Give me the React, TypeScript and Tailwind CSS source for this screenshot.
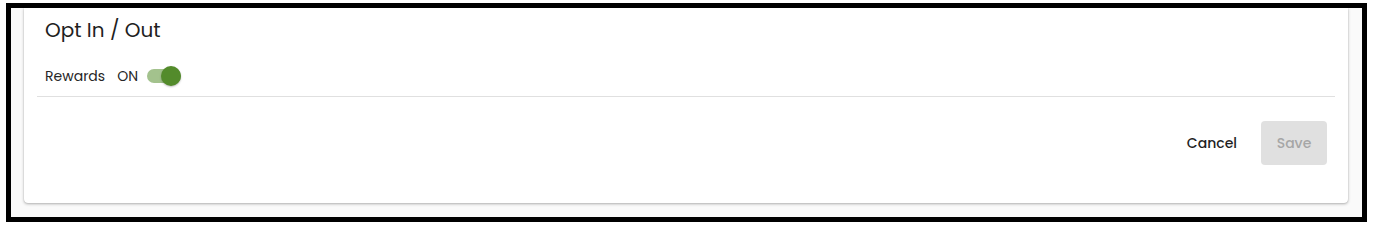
import { useState } from 'react'

function Toggle({ on, onChange }: { on: boolean; onChange: (v: boolean) => void }) {
  return (
    <button
      onClick={() => onChange(!on)}
      className="relative w-[38px] h-[22px] flex items-center"
      aria-pressed={on}
    >
      <span className={`ml-[2px] w-[34px] h-[14px] rounded-full ${on ? 'bg-[#a3c28d]' : 'bg-[#bdbdbd]'}`} />
      <span
        className={`absolute top-[1px] w-[20px] h-[20px] rounded-full shadow-[0_1px_2px_rgba(0,0,0,0.25)] ${
          on ? 'left-[16px] bg-[#538b2b]' : 'left-0 bg-[#fafafa]'
        }`}
      />
    </button>
  )
}

export default function App() {
  const [rewards, setRewards] = useState(true)

  return (
    <div className="w-[1375px] h-[229px] bg-white pt-[3px] pl-[6px] font-['Poppins','Open_Sans',sans-serif]">
      <div className="w-[1361px] h-[219px] border-[5px] border-black bg-[#fafafa] overflow-hidden">
        <div className="ml-[13px] w-[1324px] h-[195px] bg-white rounded-b-[4px] shadow-[0_1px_3px_rgba(0,0,0,0.3),0_0_1px_rgba(0,0,0,0.2)] flex flex-col">
          <div className="px-[21px] pt-[8px]">
            <h2 className="text-[20px] leading-[28px] text-[#1f1f1f]">Opt In / Out</h2>
            <div className="mt-[21px] flex items-center h-[22px]">
              <span className="text-[14px] text-[#262626]">Rewards</span>
              <span className="ml-[12px] mr-[7px] text-[14px] text-[#262626]">{rewards ? 'ON' : 'OFF'}</span>
              <Toggle on={rewards} onChange={setRewards} />
            </div>
          </div>
          <div className="mx-[13px] mt-[9px] border-t border-[#e0e0e0]" />
          <div className="flex justify-end items-center gap-[24px] px-[21px] pt-[24px]">
            <button className="text-[14px] font-medium text-[#1f1f1f]">Cancel</button>
            <button disabled className="w-[66px] h-[44px] rounded-[4px] bg-[#e0e0e0] text-[14px] font-medium text-[#a6a6a6]">
              Save
            </button>
          </div>
        </div>
      </div>
    </div>
  )
}
